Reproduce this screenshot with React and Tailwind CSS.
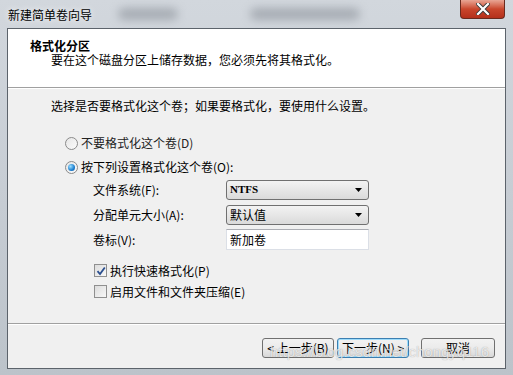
import { useState } from "react";

const font = { fontFamily: '"Noto Sans CJK SC", "Noto Sans", sans-serif' };

// Aero-style radio button
const Radio = ({ checked }) => (
  <span className="w-[13px] h-[13px] rounded-full border border-[#8a8a8a] bg-gradient-to-br from-[#e6e6e6] to-[#fbfbfb] flex items-center justify-center shrink-0">
    {checked && (
      <span className="w-[7px] h-[7px] rounded-full bg-[radial-gradient(circle_at_35%_35%,#9fe0ff,#1c7fd0_60%,#0b4f96)]" />
    )}
  </span>
);

const Checkbox = ({ checked }) => (
  <span className="w-[13px] h-[13px] border border-[#8f8f8f] bg-gradient-to-br from-[#dcdcdc] to-[#f8f8f8] flex items-center justify-center shrink-0">
    {checked && (
      <svg width="10" height="10" viewBox="0 0 10 10">
        <path d="M1.5 5.2 L4 8 L8.8 1.5" fill="none" stroke="#2b4f8f" strokeWidth="1.8" />
      </svg>
    )}
  </span>
);

const Select = ({ value, mono }) => (
  <div className="h-[20px] w-[143px] rounded-[3px] border border-[#707070] bg-gradient-to-b from-[#f3f3f3] to-[#dadada] flex items-center justify-between pl-[3px] pr-[6px]">
    <span className={mono ? "font-bold text-[11px]" : ""} style={mono ? { fontFamily: '"Liberation Serif", serif' } : undefined}>
      {value}
    </span>
    <svg width="7" height="4" viewBox="0 0 7 4">
      <path d="M0 0 H7 L3.5 4 Z" fill="#000" />
    </svg>
  </div>
);

const Button = ({ children, focused, w }) => (
  <button
    className={`h-[20px] rounded-[3px] border flex items-center justify-center bg-gradient-to-b from-[#f2f2f2] via-[#ebebeb] to-[#d8d8d8] ${
      focused ? "border-[#3c7fb1] shadow-[inset_0_0_0_1px_#9ddcfb]" : "border-[#707070]"
    } ${w}`}
  >
    {children}
  </button>
);

export default function App() {
  const [format, setFormat] = useState(true);

  return (
    <div
      className="relative w-[513px] h-[375px] overflow-hidden bg-gradient-to-b from-[#d2d7dd] via-[#c7cdd4] to-[#bcc3ca] text-[12px] text-black flex flex-col"
      style={font}
    >
      {/* blurred desktop behind the glass title bar */}
      <span className="absolute left-[118px] top-[8px] w-[60px] h-[12px] rounded-full bg-[#8a9098] blur-[5px] opacity-60" />
      <span className="absolute left-[250px] top-[8px] w-[110px] h-[12px] rounded-full bg-[#8a9098] blur-[5px] opacity-60" />

      {/* title bar */}
      <div className="relative h-[28px] flex items-center pl-[8px] pt-[2px]">
        <span className="text-[12px] [text-shadow:0_0_6px_#ffffff]">新建简单卷向导</span>
        <div className="absolute right-[8px] top-0 w-[45px] h-[19px] rounded-b-[4px] border border-t-0 border-[#6a2a1e] bg-gradient-to-b from-[#e8a594] via-[#c9462c] to-[#b4301b] flex items-center justify-center">
          <svg width="14" height="12" viewBox="0 0 14 12">
            <path d="M2 1 L12 11 M12 1 L2 11" stroke="#3a3a3a" strokeWidth="4" strokeLinecap="square" />
            <path d="M2 1 L12 11 M12 1 L2 11" stroke="#ffffff" strokeWidth="2.2" strokeLinecap="square" />
          </svg>
        </div>
      </div>

      {/* client area */}
      <div className="mx-[7px] h-[341px] border border-[#5c636b] bg-[#f0f0f0] flex flex-col">
        <div className="h-[59px] bg-white border-b border-[#a0a0a0] pt-[10px] leading-[14px]">
          <div className="pl-[22px] font-bold">格式化分区</div>
          <div className="pl-[43px]">要在这个磁盘分区上储存数据，您必须先将其格式化。</div>
        </div>
        <div className="h-px bg-white" />

        <div className="flex-1 flex flex-col">
          <div className="pl-[43px] pt-[9px] leading-[16px]">选择是否要格式化这个卷；如果要格式化，要使用什么设置。</div>

          <div className="pl-[57px] mt-[21px] flex flex-col gap-[8px] leading-[16px]">
            <label className="flex items-center gap-[3px]" onClick={() => setFormat(false)}>
              <Radio checked={!format} />
              <span className="text-[#222]">不要格式化这个卷(D)</span>
            </label>
            <label className="flex items-center gap-[3px]" onClick={() => setFormat(true)}>
              <Radio checked={format} />
              <span>按下列设置格式化这个卷(O):</span>
            </label>
          </div>

          <div className="pl-[85px] mt-[2px] grid grid-cols-[133px_143px] items-center">
            <span className="h-[25px] flex items-center">文件系统(F):</span>
            <Select value="NTFS" mono />
            <span className="h-[25px] flex items-center">分配单元大小(A):</span>
            <Select value="默认值" />
            <span className="h-[25px] flex items-center">卷标(V):</span>
            <div className="h-[21px] w-[143px] bg-white border border-[#dbdfe6] border-t-[#abadb3] flex items-center pl-[3px]">新加卷</div>
          </div>

          <div className="pl-[86px] mt-[12px] flex flex-col gap-[8px] leading-[13px]">
            <div className="flex items-center gap-[3px]">
              <Checkbox checked />
              <span>执行快速格式化(P)</span>
            </div>
            <div className="flex items-center gap-[3px]">
              <Checkbox />
              <span>启用文件和文件夹压缩(E)</span>
            </div>
          </div>
        </div>

        <div className="h-px bg-[#a0a0a0]" />
        <div className="h-px bg-white" />
        <div className="h-[43px] flex items-start pt-[13px] pl-[254px]">
          <Button w="w-[72px]">&lt; 上一步(B)</Button>
          <span className="w-[3px]" />
          <Button w="w-[72px]" focused>
            下一步(N) &gt;
          </Button>
          <span className="w-[12px]" />
          <Button w="w-[74px]">取消</Button>
        </div>
      </div>

      {/* csdn watermark */}
      <span
        className="absolute left-[270px] top-[343px] text-[15px] leading-[18px] text-white/75 [text-shadow:0_0_1px_rgba(0,0,0,0.35)] whitespace-nowrap"
        style={{ fontFamily: '"Liberation Sans", Arial, sans-serif' }}
      >
        https://blog.csdn.net/chongyq116
      </span>
    </div>
  );
}
